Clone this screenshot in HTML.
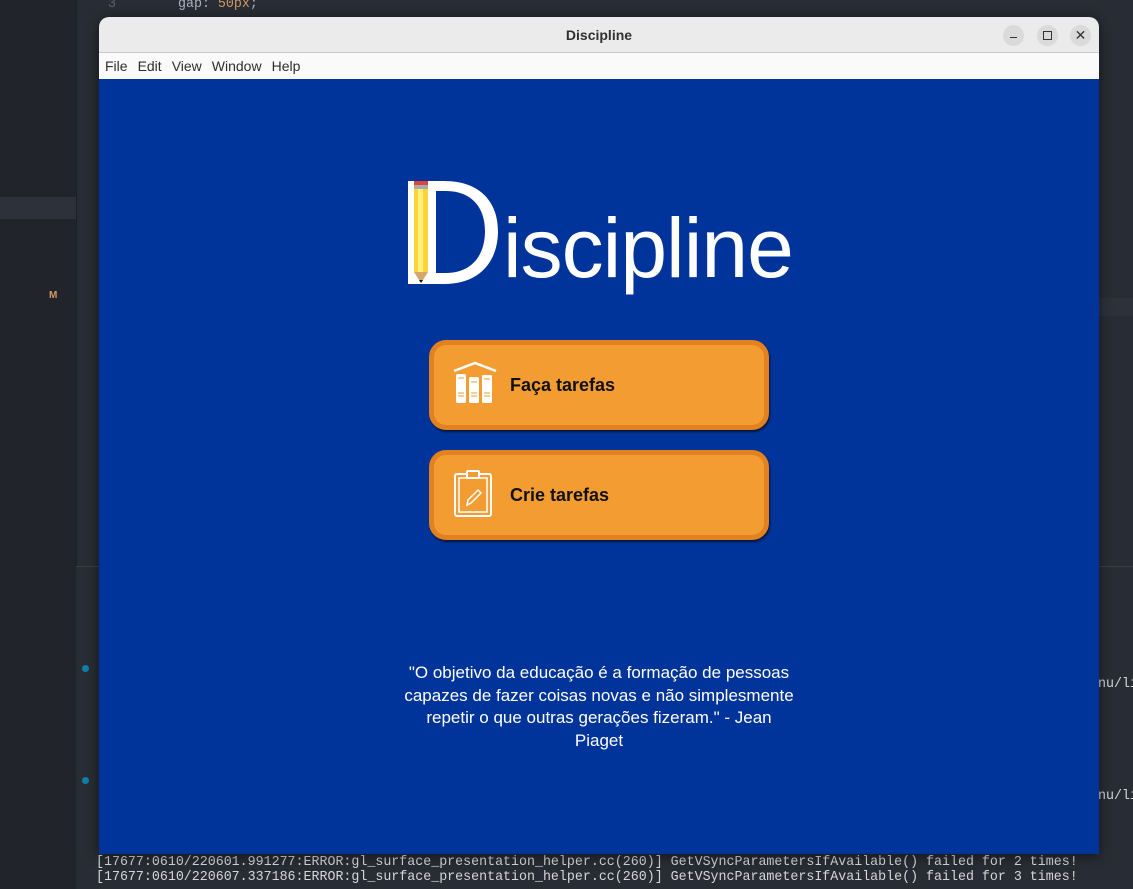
<!DOCTYPE html>
<html><head><meta charset="utf-8"><style>
*{margin:0;padding:0;box-sizing:border-box}
body{width:1133px;height:889px;overflow:hidden;background:#282c34;position:relative;font-family:"Liberation Sans",sans-serif}
.side{position:absolute;left:0;top:0;width:76px;height:889px;background:#21252b}
.term{position:absolute;left:76px;top:566px;width:1057px;height:323px;background:#282c34;border-top:1px solid #3a3f4b}
.mono{position:absolute;font-family:"Liberation Mono",monospace;font-size:14px;color:#d6d6d6;white-space:pre;transform:scaleX(0.95);transform-origin:left}
.win{position:absolute;left:99px;top:17px;width:1000px;height:837px;border-radius:10px 10px 0 0;overflow:hidden;box-shadow:0 2px 12px rgba(0,0,0,.5)}
.title{height:36px;background:#ebebeb;border-bottom:1px solid #c9c9c9;text-align:center;font-weight:bold;font-size:14px;line-height:36px;color:#303030;position:relative}
.wb{position:absolute;top:8px;width:21px;height:21px;border-radius:50%;background:#dadada}
.menu{height:26px;background:#fafafa;font-size:14px;color:#2e2e2e;line-height:26px;padding-left:6px;word-spacing:0}
.menu span{margin-right:10px}
.main{position:absolute;top:62px;left:0;width:1000px;height:775px;background:#00349a}
.btn{position:absolute;left:330px;width:340px;height:90px;border-radius:17px;background:#f29c32;border:5px solid #e2811f;box-shadow:1px 2px 2px rgba(0,0,0,.6)}
.btn span{position:absolute;left:76px;top:0;line-height:80px;font-weight:bold;font-size:18px;color:#111}
.quote{position:absolute;left:0;width:1000px;top:583px;text-align:center;color:#fff;font-size:17px;line-height:22.5px}
</style></head><body>
<div class="side"><div style="position:absolute;top:197px;left:0;width:76px;height:22px;background:#2c313a"></div><div style="position:absolute;top:290px;left:49px;color:#d19a66;font-size:10px;font-weight:bold">M</div></div>
<div style="position:absolute;left:76px;top:0;width:1px;height:566px;background:#1c1f24"></div>
<div class="mono" style="left:108px;top:-4px;color:#5c6370">3</div>
<div class="mono" style="left:178px;top:-4px;color:#abb2bf">gap: <span style="color:#d19a66">50px</span>;</div>
<div style="position:absolute;left:1099px;top:298px;width:34px;height:18px;background:#2c313a"></div>
<div class="term">
<div class="mono" style="left:20px;top:287px">[17677:0610/220601.991277:ERROR:gl_surface_presentation_helper.cc(260)] GetVSyncParametersIfAvailable() failed for 2 times!</div>
<div class="mono" style="left:20px;top:302px">[17677:0610/220607.337186:ERROR:gl_surface_presentation_helper.cc(260)] GetVSyncParametersIfAvailable() failed for 3 times!</div>
<div class="mono" style="left:1022px;top:109px">nu/li</div>
<div class="mono" style="left:1022px;top:221px">nu/li</div>
<div style="position:absolute;left:6px;top:98px;width:7px;height:7px;border-radius:50%;background:#0e7fa8"></div>
<div style="position:absolute;left:6px;top:210px;width:7px;height:7px;border-radius:50%;background:#0e7fa8"></div>
</div>
<div class="win">
<div class="title">Discipline
<div class="wb" style="left:904px"><div style="position:absolute;left:7px;top:12px;width:7px;height:1px;background:#333"></div></div>
<div class="wb" style="left:938px"><div style="position:absolute;left:6px;top:6px;width:9px;height:9px;border:1px solid #333"></div></div>
<div class="wb" style="left:971px;font-size:14px;line-height:21px;font-weight:normal;color:#333">✕</div>
</div>
<div class="menu"><span>File</span><span>Edit</span><span>View</span><span>Window</span><span>Help</span></div>
<div class="main">
<svg style="position:absolute;left:305px;top:100px" width="100" height="110" viewBox="0 0 100 110">
<path d="M4 2 H40 C78 2 94 25 94 52 C94 80 78 105 40 105 H4 Z M32 12 V94 H42 C68 94 81 76 81 52 C81 29 68 12 42 12 Z" fill="#fff" fill-rule="evenodd"/>
<rect x="8" y="2" width="18" height="89" fill="#fff"/>
<rect x="10" y="2" width="14" height="4" fill="#d9453a"/>
<rect x="10" y="6" width="14" height="4" fill="#aaa"/>
<rect x="10" y="10" width="14" height="83" fill="#fdd33a"/>
<rect x="14" y="10" width="5" height="83" fill="#fff07a"/>
<path d="M10 93 H24 L17 104 Z" fill="#d4a66a"/>
<path d="M15 101 H19 L17 104 Z" fill="#111"/>
</svg>
<div style="position:absolute;left:404px;top:119px;font-size:84px;color:#fff;letter-spacing:-1px;line-height:100px">iscipline</div>
<div class="btn" style="top:261px"><svg style="position:absolute;left:18px;top:16px" width="46" height="46" viewBox="0 0 46 46">
<path d="M2 10 L23 2 L44 10" stroke="#fff" stroke-width="2.5" fill="none"/>
<rect x="4" y="13" width="10" height="29" rx="1.5" fill="#fff"/><rect x="17" y="16" width="10" height="26" rx="1.5" fill="#fff"/><rect x="30" y="14" width="10" height="28" rx="1.5" fill="#fff"/>
<g stroke="#f29c32" stroke-width="1"><path d="M6 17h6M6 32h6M6 35h6M19 21h6M19 32h6M19 35h6M32 18h6M32 32h6M32 35h6"/></g></svg><span>Faça tarefas</span></div>
<div class="btn" style="top:371px"><svg style="position:absolute;left:18px;top:14px" width="46" height="50" viewBox="0 0 46 50">
<rect x="3" y="5" width="36" height="42" rx="2" stroke="#fff" stroke-width="2" fill="none"/>
<rect x="7" y="9" width="28" height="34" stroke="#fff" stroke-width="1.5" fill="none"/>
<rect x="15" y="2" width="12" height="7" rx="1" fill="#f29c32" stroke="#fff" stroke-width="2"/>
<path d="M15 36 L16 31 L26 21 L29 24 L19 34 Z" stroke="#fff" stroke-width="1.5" fill="none"/></svg><span>Crie tarefas</span></div>
<div class="quote">"O objetivo da educação é a formação de pessoas<br>capazes de fazer coisas novas e não simplesmente<br>repetir o que outras gerações fizeram." - Jean<br>Piaget</div>
</div></div>
</body></html>
